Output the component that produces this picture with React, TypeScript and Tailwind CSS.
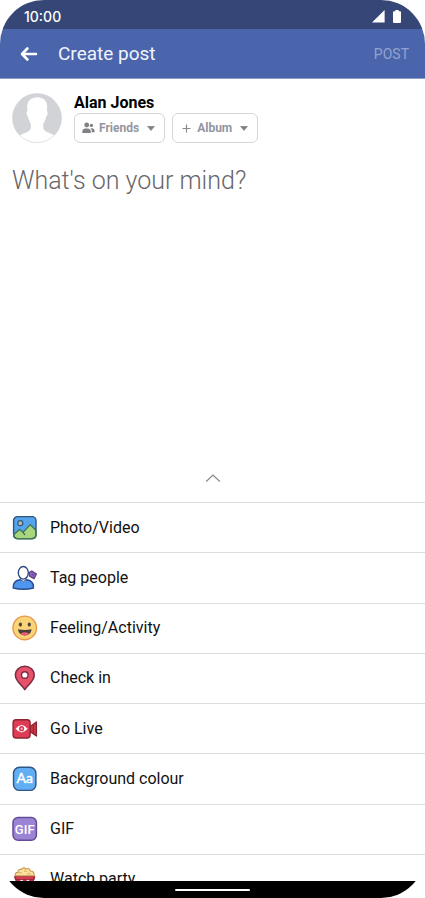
import { useState, type ReactNode } from 'react';

interface PostOption {
  id: string;
  label: string;
  icon: ReactNode;
}

function PhotoIcon() {
  return (
    <svg viewBox="0 0 26 26" className="w-[26px] h-[26px]" aria-hidden="true">
      <rect x="1.6" y="1.6" width="22.4" height="22" rx="4" fill="#57a4ee" />
      <path d="M2 19.5 L7.5 14.4 L11 17 L18.3 9.6 L24 15.2 V20 Q24 23.6 20.4 23.6 H5.2 Q2 23.6 2 20 Z" fill="#a9d57c" />
      <path d="M2.2 19.3 L7.5 14.4 L11.2 17.6 L13 20 M11 17.2 L18.3 9.6 L23.8 15.2" fill="none" stroke="#3d7358" strokeWidth="1.3" />
      <rect x="1.6" y="1.6" width="22.4" height="22" rx="4" fill="none" stroke="#2e5675" strokeWidth="1.4" />
      <path d="M1.7 18.5 V20 Q1.7 23.7 5.4 23.7 H20.2 Q24 23.7 24 20 V15.5" fill="none" stroke="#417850" strokeWidth="1.4" />
      <circle cx="8.3" cy="8.2" r="2.5" fill="#b8bea0" stroke="#345c83" strokeWidth="1.3" />
    </svg>
  );
}

function TagPeopleIcon() {
  return (
    <svg viewBox="0 0 26 26" className="w-[26px] h-[26px]" aria-hidden="true">
      <path d="M17.2 7.6 L19.8 6 L24.4 9 L22 13.6 L17.6 11.2 Z" fill="#8b61c4" stroke="#59427f" strokeWidth="1.3" strokeLinejoin="round" />
      <circle cx="20.8" cy="9.8" r="1" fill="#6c4a9f" />
      <path d="M1.2 23 C1 17.8 3.6 15.3 8.2 14.8 H14.4 C19 15.3 21.8 17.8 21.4 23 Q11.5 25.6 1.2 23 Z" fill="#4f96ee" stroke="#284b8c" strokeWidth="1.4" strokeLinejoin="round" />
      <path d="M8.7 13 V15.4 Q11.3 17.6 14 15.4 V13 Z" fill="#fff" />
      <path d="M8.7 13.2 V15.2 Q11.3 17.4 14 15.2 V13.2" fill="none" stroke="#3b5b96" strokeWidth="1" />
      <ellipse cx="11.3" cy="7.8" rx="5" ry="6.3" fill="#fff" stroke="#304a7e" strokeWidth="1.4" />
    </svg>
  );
}

function FeelingIcon() {
  return (
    <svg viewBox="0 0 26 26" className="w-[26px] h-[26px]" aria-hidden="true">
      <circle cx="12.7" cy="12.9" r="11.8" fill="#fad477" stroke="#e59a4e" strokeWidth="1.4" />
      <ellipse cx="8.4" cy="9.6" rx="1.6" ry="2.1" fill="#4b4541" />
      <ellipse cx="17.3" cy="9.6" rx="1.6" ry="2.1" fill="#4b4541" />
      <path d="M6 14.3 Q12.8 15.6 19.6 14.3 Q19 20.4 12.8 20.4 Q6.7 20.4 6 14.3 Z" fill="#453f3e" />
      <path d="M8.2 18.8 Q12.8 15.9 17.4 18.8 Q15.5 20.4 12.8 20.4 Q10 20.4 8.2 18.8 Z" fill="#e65d6d" />
    </svg>
  );
}

function CheckInIcon() {
  return (
    <svg viewBox="0 0 26 26" className="w-[26px] h-[26px]" aria-hidden="true">
      <path d="M12.8 24.6 C11 21 3.4 16.4 3.4 10.2 C3.4 4.8 7.6 1.3 12.8 1.3 C18 1.3 22.2 4.8 22.2 10.2 C22.2 16.4 14.6 21 12.8 24.6 Z" fill="#e7526a" stroke="#7b2c43" strokeWidth="1.5" strokeLinejoin="round" />
      <circle cx="12.8" cy="10" r="3.3" fill="#fff" stroke="#7b2c43" strokeWidth="1.4" />
    </svg>
  );
}

function LiveIcon() {
  return (
    <svg viewBox="0 0 26 26" className="w-[26px] h-[26px]" aria-hidden="true">
      <path d="M18.2 10.5 L24.4 5.9 V20 L18.2 15.8 Z" fill="#c63c49" stroke="#8d2430" strokeWidth="1.3" strokeLinejoin="round" />
      <path d="M21.4 8.6 V17.6" stroke="#8d2430" strokeWidth="1" />
      <rect x="1.1" y="3.7" width="17" height="18.3" rx="3" fill="#df3d55" stroke="#8d2430" strokeWidth="1.4" />
      <path d="M3.6 12.8 Q9.6 5.4 15.6 12.8 Q9.6 20 3.6 12.8 Z" fill="#fff" />
      <circle cx="9.6" cy="12.7" r="2.6" fill="#df3d55" />
      <circle cx="9.6" cy="12.7" r="1" fill="#f7c8cf" />
    </svg>
  );
}

function BackgroundIcon() {
  return (
    <svg viewBox="0 0 26 26" className="w-[26px] h-[26px]" aria-hidden="true">
      <rect x="1.5" y="1.2" width="22.4" height="23.2" rx="6" fill="#62aef3" stroke="#2f5686" strokeWidth="1.4" />
      <text x="12.7" y="17.4" textAnchor="middle" fontFamily="Lato, sans-serif" fontSize="14" fill="#fff" stroke="#fff" strokeWidth="0.4">Aa</text>
    </svg>
  );
}

function GifIcon() {
  return (
    <svg viewBox="0 0 26 26" className="w-[26px] h-[26px]" aria-hidden="true">
      <rect x="1" y="1.6" width="23.4" height="22.6" rx="5" fill="#9b84d4" stroke="#634d98" strokeWidth="1.5" />
      <text x="12.7" y="17.8" textAnchor="middle" fontFamily="Roboto, sans-serif" fontWeight="500" fontSize="13" fill="#fff">GIF</text>
    </svg>
  );
}

function PopcornIcon() {
  return (
    <svg viewBox="0 0 26 26" className="w-[26px] h-[26px]" aria-hidden="true">
      <path d="M3.4 10.5 H22 L19.8 24.4 H5.6 Z" fill="#fff" />
      <path d="M3.4 10.5 H8 L9 24.4 H5.6 Z M10.8 10.5 H14.8 L14.2 24.4 H11.4 Z M17.5 10.5 H22 L19.8 24.4 H16.4 Z" fill="#cf3349" />
      <path d="M2.6 10.2 H22.8 L22.2 13.6 H3.2 Z" fill="#d83a50" stroke="#8d2635" strokeWidth="0.9" />
      <path d="M3.4 10.5 L5.6 24.4 H19.8 L22 10.5" fill="none" stroke="#9b2c3b" strokeWidth="1.2" />
      <path d="M3.2 9.8 Q2.6 6.6 5.9 6.4 Q5.8 3 9.3 3.4 Q11.5 .6 13.9 3 Q17.6 1.4 18.3 5 Q22.4 5 22.2 9.8 Z" fill="#fae0a1" stroke="#c9964f" strokeWidth="1.1" />
      <path d="M7 7.3 Q8.5 5.5 10 7.3 M12 5.4 Q13.6 3.9 15 5.8 M15.2 8.4 Q16.8 6.6 18.6 8.2" fill="none" stroke="#dba65f" strokeWidth="1" />
    </svg>
  );
}

const postOptions: PostOption[] = [
  { id: 'photo', label: 'Photo/Video', icon: <PhotoIcon /> },
  { id: 'tag', label: 'Tag people', icon: <TagPeopleIcon /> },
  { id: 'feeling', label: 'Feeling/Activity', icon: <FeelingIcon /> },
  { id: 'checkin', label: 'Check in', icon: <CheckInIcon /> },
  { id: 'live', label: 'Go Live', icon: <LiveIcon /> },
  { id: 'background', label: 'Background colour', icon: <BackgroundIcon /> },
  { id: 'gif', label: 'GIF', icon: <GifIcon /> },
  { id: 'party', label: 'Watch party', icon: <PopcornIcon /> }
];

function Caret() {
  return (
    <svg viewBox="0 0 8 5" className="w-2 h-[5px]" aria-hidden="true">
      <path d="M0.5 0.3 H7.5 L4 4.6 Z" fill="#808084" stroke="#808084" strokeWidth="0.6" strokeLinejoin="round" />
    </svg>
  );
}

function StatusBar() {
  return (
    <div className="h-[29px] shrink-0 bg-[#364676] flex items-center justify-between pl-6 pr-6 text-white">
      <span className="font-[Inter,sans-serif] text-sm font-medium leading-5 pt-1">10:00</span>
      <div className="flex items-center gap-2 pt-1">
        <svg viewBox="0 0 13 13" className="w-[13px] h-[13px]" aria-hidden="true">
          <path d="M0 12.6 L12.6 0 V12.6 Z" fill="#fff" />
        </svg>
        <svg viewBox="0 0 8 13" className="w-2 h-[13px]" aria-hidden="true">
          <path d="M2.3 0 H5.7 V1.3 H7 Q8 1.3 8 2.3 V12 Q8 13 7 13 H1 Q0 13 0 12 V2.3 Q0 1.3 1 1.3 H2.3 Z" fill="#fff" />
        </svg>
      </div>
    </div>
  );
}

export default function App() {
  const [text, setText] = useState('');

  return (
    <div className="h-screen bg-white font-[Roboto,sans-serif]">
      <div className="h-full flex flex-col bg-white rounded-[44px] overflow-hidden">
        <StatusBar />

        {/* Title bar */}
        <header className="h-[50px] shrink-0 bg-[#4a65ab] border-b border-[#8e9dc8] flex items-center pl-5 pr-4">
          <button type="button" aria-label="Back" className="mr-5 cursor-pointer">
            <svg viewBox="0 0 18 16" className="w-[18px] h-4" aria-hidden="true">
              <path d="M16 8 H2.6 M7.4 2.5 L2 8 L7.4 13.5" fill="none" stroke="#fff" strokeWidth="2.6" strokeLinecap="round" strokeLinejoin="round" />
            </svg>
          </button>
          <h1 className="flex-1 text-[19px] leading-6 text-[#f1f4fb]">Create post</h1>
          <button type="button" className="text-sm text-[#93a3cf] cursor-pointer">POST</button>
        </header>

        {/* Composer */}
        <main className="flex-1 min-h-0 flex flex-col px-3 pt-[14px]">
          <div className="flex gap-3">
            <svg viewBox="0 0 50 50" className="w-[50px] h-[50px]" role="img" aria-label="Alan Jones">
              <circle cx="25" cy="25" r="24.5" fill="#d2d3d7" />
              <path d="M7.6 42.4 C10.5 40.2 15 39.8 17.6 37.4 C19.4 35.4 19.3 31.6 18.1 29.2 C16.8 27.4 16.2 25.2 15.8 23 C14.4 22.8 14.2 18.4 15.5 17.8 C13.8 9 18 4.2 25.2 4.2 C32.6 4.2 36.4 9 34.8 17.8 C36 18.4 35.8 22.8 34.4 23 C34 25.2 33.2 27.4 32 29.2 C30.8 31.6 30.8 35.4 32.6 37.4 C35.2 39.8 39.6 40.2 42.4 42.4 A24.5 24.5 0 0 1 7.6 42.4 Z" fill="#fff" />
              <circle cx="25" cy="25" r="24.5" fill="none" stroke="#d2d3d7" strokeWidth="0.6" />
            </svg>
            <div>
              <p className="text-base leading-5 font-bold text-black">Alan Jones</p>
              <div className="flex gap-[7px] text-xs font-bold text-[#9395a1]">
                <button type="button" className="h-[30px] pl-[7px] pr-[9px] flex items-center rounded-md border border-[#d6d6da] cursor-pointer">
                  <svg viewBox="0 0 13 12" className="w-[13px] h-3 mr-1" aria-hidden="true">
                    <circle cx="4.7" cy="3" r="2.4" fill="#828286" />
                    <circle cx="9.4" cy="3.4" r="1.7" fill="#828286" />
                    <path d="M0.3 11 V9 Q0.5 6.6 3.2 6.4 H6 Q8.6 6.6 8.8 9 V11 Z" fill="#828286" />
                    <path d="M8.4 6.2 H10 Q12.5 6.4 12.6 8.6 V10.2 H9.7 V8.6 Q9.5 7 8.4 6.2 Z" fill="#828286" />
                  </svg>
                  <span className="mr-2">Friends</span>
                  <Caret />
                </button>
                <button type="button" className="h-[30px] px-[9px] flex items-center rounded-md border border-[#d6d6da] cursor-pointer">
                  <svg viewBox="0 0 9 9" className="w-[9px] h-[9px] mr-[6px]" aria-hidden="true">
                    <path d="M4.5 0.5 V8.5 M0.5 4.5 H8.5" stroke="#8a8a8e" strokeWidth="1.2" />
                  </svg>
                  <span className="mr-2">Album</span>
                  <Caret />
                </button>
              </div>
            </div>
          </div>

          <textarea
            value={text}
            onChange={(e) => setText(e.target.value)}
            aria-label="Post text"
            placeholder="What's on your mind?"
            className="flex-1 min-h-0 w-full mt-5 resize-none outline-none text-[25px] leading-9 font-light text-black placeholder:text-[#67676a]"
          />

          <button type="button" aria-label="Expand options" className="self-center mb-5 cursor-pointer">
            <svg viewBox="0 0 16 8" className="w-4 h-2" aria-hidden="true">
              <path d="M1.2 7.5 L8 1 L14.8 7.5" fill="none" stroke="#858585" strokeWidth="1.1" />
            </svg>
          </button>
        </main>

        {/* Options list, cut off by the navigation bar */}
        <div className="h-[379px] shrink-0 overflow-hidden">
          <ul className="h-[402px] flex flex-col">
            {postOptions.map((option) => (
              <li key={option.id} className="flex-1 border-t border-[#dedede]">
                <button type="button" className="w-full h-full px-3 flex items-center gap-3 text-left text-base text-[#111] cursor-pointer">
                  {option.icon}
                  <span>{option.label}</span>
                </button>
              </li>
            ))}
          </ul>
        </div>

        <div className="h-[17px] shrink-0 bg-black flex items-center justify-center">
          <div className="w-[75px] h-[2px] rounded-full bg-white" />
        </div>
      </div>
    </div>
  );
}
